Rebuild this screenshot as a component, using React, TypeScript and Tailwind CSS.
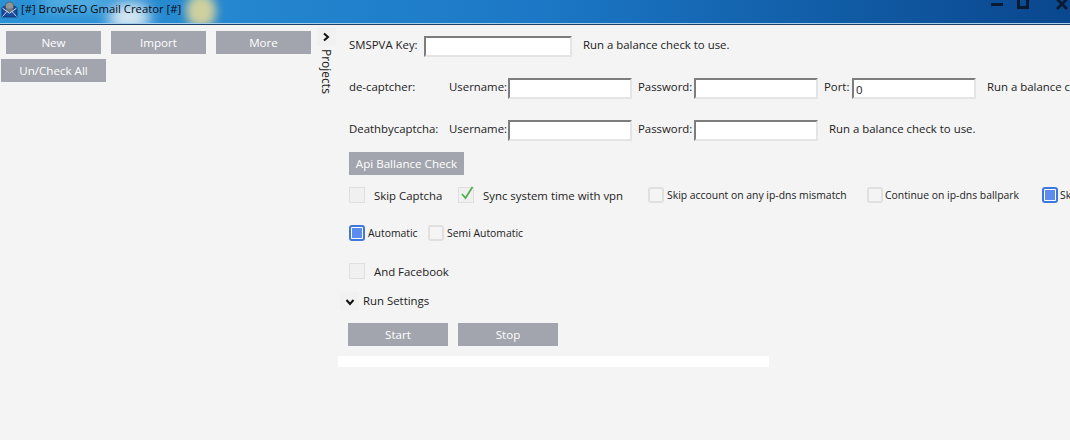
const font = "font-['Open_Sans','Noto_Sans',sans-serif]";

function Btn({ label, w }: { label: string; w: string }) {
  return (
    <div className={`${w} h-[23px] shrink-0 bg-[#a2a5ad] text-white text-[11.6px] flex items-center justify-center`}>
      {label}
    </div>
  );
}

function Field({ w }: { w: string }) {
  return (
    <div className={`${w} h-[21px] shrink-0 bg-white border-2 border-[#e4e4e4] border-t-[#7d7d7d] border-l-[#7d7d7d]`} />
  );
}

function Box({ checked = false }: { checked?: boolean }) {
  return (
    <div className="relative w-4 h-4 shrink-0 bg-[#f0f0f0] border border-[#dfdfdf]">
      {checked && (
        <svg viewBox="0 0 16 16" className="absolute left-0 top-[-3px] w-4 h-4" fill="none">
          <path d="M3 9 L6.5 13 L13.5 2" stroke="#4cae4c" strokeWidth="1.7" />
        </svg>
      )}
    </div>
  );
}

function Round({ on = false }: { on?: boolean }) {
  return (
    <div
      className={`w-4 h-4 shrink-0 rounded-[3px] border-2 flex items-center justify-center ${on ? "border-[#3f77e0] bg-white" : "border-[#e0e0e0] bg-[#f4f4f4]"}`}
    >
      {on && <div className="w-[10px] h-[10px] bg-[#5b8cee]" />}
    </div>
  );
}

function Chevron({ dir }: { dir: "right" | "down" }) {
  return (
    <svg viewBox="0 0 10 10" className="w-[10px] h-[10px]" fill="none">
      <path d={dir === "right" ? "M3 1.5 L7 5 L3 8.5" : "M1.5 3 L5 7 L8.5 3"} stroke="#111" strokeWidth="2" />
    </svg>
  );
}

export default function App() {
  return (
    <div className={`${font} w-[1070px] h-[440px] overflow-hidden bg-[#f4f4f4] text-[#222] text-[11.4px] flex flex-col`}>
      {/* Title bar */}
      <div className="relative h-[25px] shrink-0 overflow-hidden border-b border-b-[#1b3f66] bg-gradient-to-r from-[#2b92d6] via-[#1c78c6] to-[#0a478e]">
        <div className="absolute left-[108px] top-[2px] w-[42px] h-[30px] rounded-full bg-[#e4f0f6] opacity-90 blur-[7px]" />
        <div className="absolute left-[186px] top-[-6px] w-[30px] h-[34px] rounded-full bg-[#d8d49c] opacity-95 blur-[5px]" />
        <div className="absolute left-[40px] top-[-8px] w-[70px] h-[20px] rounded-full bg-[#6cc0ea] opacity-70 blur-[8px]" />
        <div className="absolute left-0 right-0 bottom-0 h-px bg-[#a9cfe9]" />
        <div className="relative flex items-center h-[19px] pl-[1px]">
          <svg viewBox="0 0 18 18" className="w-[17px] h-[17px] shrink-0">
            <path d="M1 7 L9 3 L17 7 V17 H1 Z" fill="#1c4c9c" stroke="#0d2f6a" strokeWidth="0.8" />
            <circle cx="9" cy="5.5" r="4.4" fill="#8f9598" stroke="#4c5256" strokeWidth="0.8" />
            <rect x="5.5" y="8" width="7" height="3.5" fill="#70767a" />
            <path d="M1.5 7.5 L9 13 L16.5 7.5" stroke="#dbe7f7" strokeWidth="1" fill="none" />
            <path d="M1.5 16.5 L6.5 11 M16.5 16.5 L11.5 11" stroke="#dbe7f7" strokeWidth="0.9" />
          </svg>
          <span className="ml-[3px] text-[11.3px] text-[#0a0a14] whitespace-nowrap">[#] BrowSEO Gmail Creator [#]</span>
        </div>
        <div className="absolute left-[991px] top-[3px] w-[12px] h-[3px] bg-[#0a1a30]" />
        <div className="absolute left-[1017px] top-[-3px] w-[12px] h-[12px] border-[3px] border-[#0a1a30]" />
        <svg viewBox="0 0 12 12" className="absolute left-[1056px] top-[-2px] w-[12px] h-[12px]" fill="none">
          <path d="M1 1 L11 11 M11 1 L1 11" stroke="#0a1a30" strokeWidth="2.8" />
        </svg>
      </div>

      <div className="flex flex-1 min-h-0">
        {/* Project list */}
        <div className="w-[316px] shrink-0 pt-[6px]">
          <div className="flex gap-[10px] pl-[6px]">
            <Btn label="New" w="w-[95px]" />
            <Btn label="Import" w="w-[95px]" />
            <Btn label="More" w="w-[95px]" />
          </div>
          <div className="pl-[1px] mt-[5px]">
            <Btn label="Un/Check All" w="w-[105px]" />
          </div>
        </div>

        {/* Collapsed "Projects" expander */}
        <div className="w-[22px] shrink-0 pr-[2px] flex flex-col items-center pt-[2px]">
          <div className="w-[19px] h-[19px] bg-[#f1f1f1] flex items-center justify-center">
            <Chevron dir="right" />
          </div>
          <div className="[writing-mode:vertical-rl] mt-[3px] text-[12px] leading-[14px] text-[#222]">Projects</div>
        </div>

        {/* Settings */}
        <div className="flex-1 min-w-0 overflow-hidden whitespace-nowrap">
          <div className="flex items-center h-[21px] mt-[11px] pl-[11px]">
            <span className="w-[75px] shrink-0 pb-1">SMSPVA Key:</span>
            <Field w="w-[148px]" />
            <span className="ml-[11px] pb-1">Run a balance check to use.</span>
          </div>

          <div className="flex items-center h-[21px] mt-[21px] pl-[11px]">
            <span className="w-[100px] shrink-0 pb-1">de-captcher:</span>
            <span className="w-[59px] shrink-0 pb-1">Username:</span>
            <Field w="w-[124px]" />
            <span className="ml-[6px] w-[56px] shrink-0 pb-1">Password:</span>
            <Field w="w-[124px]" />
            <span className="ml-[6px] w-[28px] shrink-0 pb-1">Port:</span>
            <div className="w-[124px] h-[21px] shrink-0 bg-white border-2 border-[#e4e4e4] border-t-[#7d7d7d] border-l-[#7d7d7d] leading-[20px] pl-[2px]">0</div>
            <span className="ml-[11px] pb-1">Run a balance check to use.</span>
          </div>

          <div className="flex items-center h-[21px] mt-[21px] pl-[11px]">
            <span className="w-[100px] shrink-0 pb-1">Deathbycaptcha:</span>
            <span className="w-[59px] shrink-0 pb-1">Username:</span>
            <Field w="w-[124px]" />
            <span className="ml-[6px] w-[56px] shrink-0 pb-1">Password:</span>
            <Field w="w-[124px]" />
            <span className="ml-[11px] pb-1">Run a balance check to use.</span>
          </div>

          <div className="pl-[11px] mt-[11px]">
            <Btn label="Api Ballance Check" w="w-[115px]" />
          </div>

          <div className="flex items-center h-4 mt-[12px] pl-[11px]">
            <Box />
            <span className="ml-[9px] w-[84px] shrink-0 pt-[2px]">Skip Captcha</span>
            <Box checked />
            <span className="ml-[9px] w-[165px] shrink-0 pt-[2px]">Sync system time with vpn</span>
            <Round />
            <span className="ml-[3px] w-[200px] shrink-0 text-[10.4px] pt-[2px]">Skip account on any ip-dns mismatch</span>
            <Round />
            <span className="ml-[2px] w-[157px] shrink-0 text-[10.4px] pt-[2px]">Continue on ip-dns ballpark</span>
            <Round on />
            <span className="ml-[2px] text-[10.4px] pt-[2px]">Skip</span>
          </div>

          <div className="flex items-center h-4 mt-[22px] pl-[11px]">
            <Round on />
            <span className="ml-[3px] w-[60px] shrink-0 text-[10.4px] pt-[2px]">Automatic</span>
            <Round />
            <span className="ml-[3px] text-[10.4px] pt-[2px]">Semi Automatic</span>
          </div>

          <div className="flex items-center h-4 mt-[22px] pl-[11px]">
            <Box />
            <span className="ml-[9px] pt-[2px]">And Facebook</span>
          </div>

          <div className="flex items-center h-[19px] mt-[13px] pl-[2px]">
            <div className="w-[19px] h-[19px] bg-[#f1f1f1] flex items-center justify-center">
              <Chevron dir="down" />
            </div>
            <span className="ml-[4px] pb-[2px]">Run Settings</span>
          </div>

          <div className="flex gap-[10px] pl-[10px] mt-[12px]">
            <Btn label="Start" w="w-[100px]" />
            <Btn label="Stop" w="w-[100px]" />
          </div>

          <div className="w-[431px] h-[11px] bg-white mt-[10px]" />
        </div>
      </div>
    </div>
  );
}
